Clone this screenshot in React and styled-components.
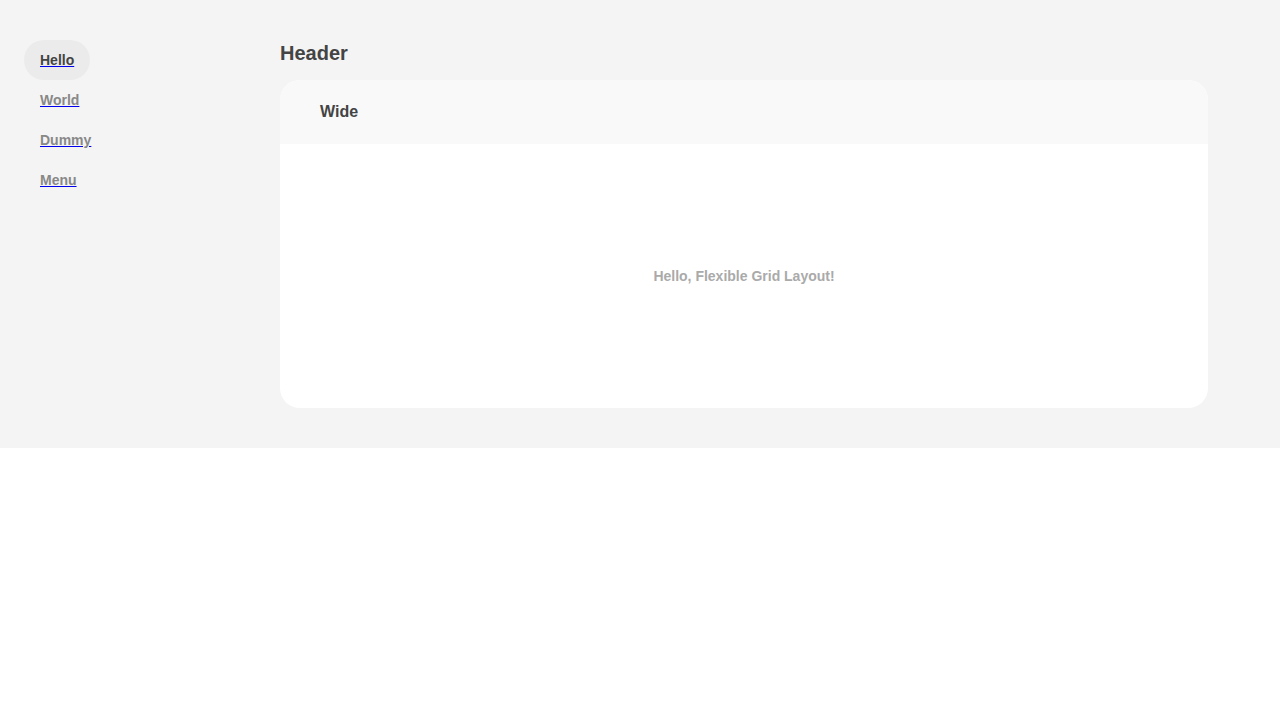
import React from 'react';
import styled, { createGlobalStyle } from 'styled-components';

const GlobalStyle = createGlobalStyle`
  body {
    margin: 0;
    background: #fff;
    font-family: "Liberation Sans", Arial, sans-serif;
    color: #444;
  }
`;

const Layout = styled.div`
  display: grid;
  grid-template-columns: 256px 928px;
  background: #f4f4f4;
  padding: 40px 72px 40px 24px;
`;

const Nav = styled.nav`
  display: flex;
  flex-direction: column;
  align-items: flex-start;
`;

const NavLink = styled.a`
  display: block;
  height: 40px;
  line-height: 40px;
  padding: 0 16px;
  border-radius: 20px;
  font-size: 14px;
  font-weight: 700;
  color: ${(p) => (p.$active ? '#444' : '#888')};
  background: ${(p) => (p.$active ? '#ebebeb' : 'transparent')};
  text-decoration: underline;
  text-decoration-color: #0000ee;
  cursor: pointer;
`;

const Main = styled.main`
  display: flex;
  flex-direction: column;
`;

const Header = styled.h1`
  margin: 0;
  height: 40px;
  line-height: 26px;
  font-size: 20px;
  font-weight: 700;
  color: #444;
`;

const Card = styled.section`
  border-radius: 20px;
  overflow: hidden;
  background: #fff;
`;

const CardHead = styled.div`
  height: 64px;
  display: flex;
  align-items: center;
  padding: 0 40px;
  background: #f9f9f9;
  font-size: 16px;
  font-weight: 700;
  color: #444;
`;

const CardBody = styled.div`
  height: 264px;
  display: flex;
  align-items: center;
  justify-content: center;
  font-size: 14px;
  font-weight: 700;
  color: #aaa;
`;

const items = ['Hello', 'World', 'Dummy', 'Menu'];

export default function App() {
  return (
    <>
      <GlobalStyle />
      <Layout>
        <Nav>
          {items.map((item, i) => (
            <NavLink key={item} $active={i === 0}>
              {item}
            </NavLink>
          ))}
        </Nav>
        <Main>
          <Header>Header</Header>
          <Card>
            <CardHead>Wide</CardHead>
            <CardBody>Hello, Flexible Grid Layout!</CardBody>
          </Card>
        </Main>
      </Layout>
    </>
  );
}
